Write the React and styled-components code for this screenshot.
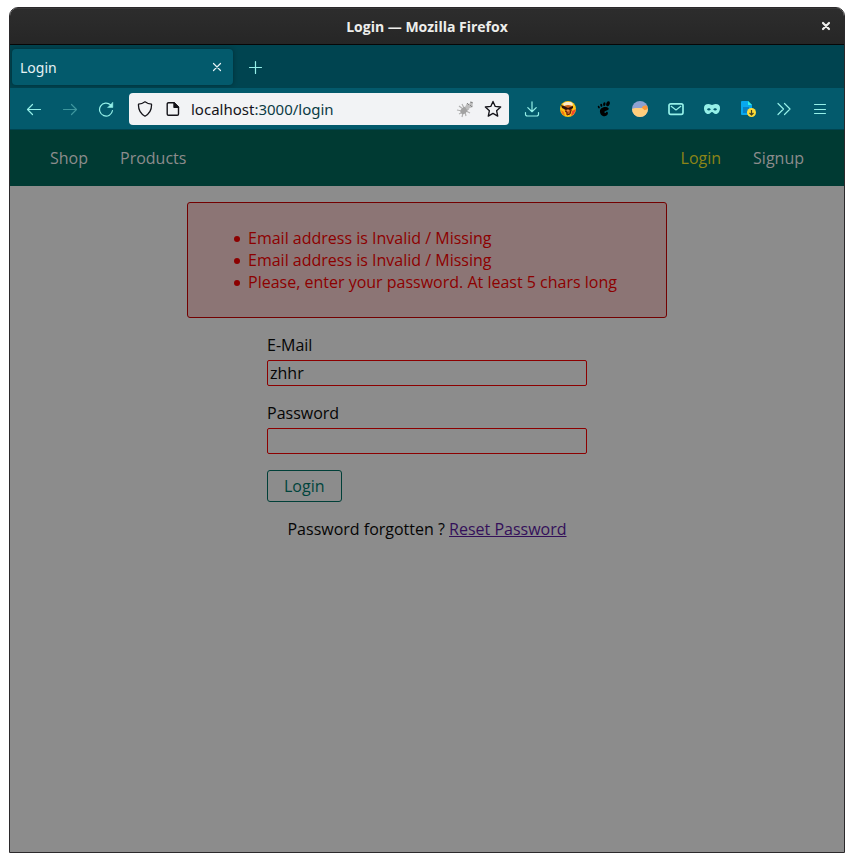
import React from "react";
import styled, { createGlobalStyle } from "styled-components";

const GlobalStyle = createGlobalStyle`
  *, *::before, *::after { box-sizing: border-box; }
  body { margin: 0; background: #ffffff; }
  button, input { font: inherit; }
`;

const Desktop = styled.div`
  display: flex;
  min-height: 100vh;
  padding: 7px 9px 9px;
  font-family: "Noto Sans", "Open Sans", sans-serif;
`;

const BrowserWindow = styled.div`
  flex: 1;
  min-width: 0;
  display: flex;
  flex-direction: column;
  border: 1px solid #2b292b;
  border-radius: 9px 9px 0 0;
  overflow: hidden;
`;

const TitleBar = styled.header`
  display: grid;
  grid-template-columns: 36px 1fr 36px;
  align-items: center;
  height: 37px;
  background: linear-gradient(#2d2d2d, #262626);
  border-bottom: 1px solid #070707;
  box-shadow: inset 0 1px 0 #383838;
`;

const WindowTitle = styled.div`
  grid-column: 2;
  padding-top: 2px;
  color: #eeeeec;
  font-family: "Open Sans", sans-serif;
  font-size: 14px;
  font-weight: 700;
  line-height: 20px;
  text-align: center;
`;

const IconButton = styled.button`
  display: grid;
  place-items: center;
  flex: none;
  width: ${(p) => p.$width || 36}px;
  height: 32px;
  padding: 0;
  border: 0;
  border-radius: 4px;
  background: transparent;
  color: ${(p) => p.$color || "#95f0e8"};
  opacity: ${(p) => (p.disabled ? 0.4 : 1)};
`;

const TabStrip = styled.div`
  display: flex;
  align-items: center;
  gap: 4px;
  height: 43px;
  padding: 0 2px;
  background: #004450;
`;

const Tab = styled.div`
  display: flex;
  align-items: center;
  justify-content: space-between;
  width: 221px;
  height: 36px;
  padding: 0 0 0 8px;
  border-radius: 4px;
  background: #035a6c;
  box-shadow: 0 0 4px rgba(0, 25, 30, 0.5);
  color: #e6f2f4;
  font-size: 14px;
  line-height: 20px;
`;

const TabTitle = styled.span`
  padding-top: 2px;
`;

const Toolbar = styled.div`
  display: flex;
  align-items: center;
  height: 42px;
  padding: 0 6px;
  background: #035a6c;
  border-bottom: 1px solid #004450;
`;

const AddressBar = styled.div`
  flex: 1;
  min-width: 0;
  display: flex;
  align-items: center;
  height: 32px;
  margin: 0 5px;
  padding: 0 2px;
  border-radius: 4px;
  background: #f2f3f5;
`;

const Address = styled.div`
  flex: 1;
  min-width: 0;
  padding-left: 4px;
  color: #0c3c44;
  font-size: 15px;
  line-height: 20px;
  white-space: nowrap;
  overflow: hidden;
`;

const Host = styled.span`
  color: #15141a;
`;

const Page = styled.div`
  flex: 1;
  background: #8c8c8c;
  color: #050505;
  font-family: "Open Sans", sans-serif;
  font-size: 16px;
  line-height: 22px;
`;

const MainNav = styled.nav`
  display: flex;
  align-items: center;
  justify-content: space-between;
  height: 56px;
  padding: 0 40px;
  background: #003a33;
`;

const NavGroup = styled.div`
  display: flex;
  gap: 32px;
`;

const NavLink = styled.a`
  color: ${(p) => (p.$active ? "#8c8517" : "#8c8c8c")};
  text-decoration: none;
`;

const Main = styled.main`
  display: flex;
  flex-direction: column;
  align-items: center;
  gap: 16px;
  padding: 16px;
`;

const ErrorBox = styled.div`
  width: 100%;
  max-width: 480px;
  padding: 24px 16px 24px 20px;
  border: 1px solid #730000;
  border-radius: 3px;
  background: #8c7575;
  color: #8c0000;
`;

const ErrorList = styled.ul`
  margin: 0;
  padding: 0 0 0 26px;
  list-style: none;
`;

const ErrorItem = styled.li`
  display: flex;
  align-items: center;
  gap: 8px;

  &::before {
    content: "";
    flex: none;
    width: 6px;
    height: 6px;
    margin-top: 2px;
    border-radius: 50%;
    background: currentColor;
  }
`;

const LoginForm = styled.form`
  display: flex;
  flex-direction: column;
  align-items: flex-start;
  gap: 16px;
  width: 100%;
  max-width: 320px;
`;

const Field = styled.div`
  display: flex;
  flex-direction: column;
  gap: 4px;
  width: 100%;
`;

const TextInput = styled.input`
  width: 100%;
  height: 26px;
  padding: 1px 2px;
  border: 1px solid #8c0000;
  border-radius: 2px;
  outline: none;
  background: #8c8c8c;
  color: #050505;
`;

const SubmitButton = styled.button`
  height: 32px;
  padding: 0 16px;
  border: 1px solid #003f38;
  border-radius: 3px;
  background: transparent;
  color: #00443c;
`;

const ResetText = styled.p`
  margin: 0;
`;

const ResetLink = styled.a`
  color: #34105a;
`;

const Line = ({ size = 16, width = 1.2, children }) => (
  <svg
    width={size}
    height={size}
    viewBox="0 0 16 16"
    fill="none"
    stroke="currentColor"
    strokeWidth={width}
    strokeLinecap="round"
    strokeLinejoin="round"
    aria-hidden="true"
  >
    {children}
  </svg>
);

const BackIcon = () => (
  <Line>
    <path d="M14.5 8.5h-13M6.5 3.5l-5 5 5 5" />
  </Line>
);

const ForwardIcon = () => (
  <Line>
    <path d="M1.5 8.5h13M9.5 3.5l5 5-5 5" />
  </Line>
);

const ReloadIcon = () => (
  <Line>
    <path d="M12.6 3.9A6.5 6.500 0 1 0 14.5 9.5" />
    <path d="M14.800 1.500v5h-5z" fill="currentColor" strokeWidth="0.5" />
  </Line>
);

const ShieldIcon = () => (
  <Line width={1.3}>
    <path d="M8 .8c2 1.5 4.200 2.300 6.500 2.400.3 4.800-1.800 9.300-6.500 12-4.700-2.700-6.800-7.200-6.500-12C3.800 3.100 6 2.300 8 .8z" />
  </Line>
);

const PageIcon = () => (
  <Line width={1.4}>
    <path d="M3.500 1.700h5.500l4.500 4.500v6.800a1.300 1.300 0 0 1-1.300 1.300H3.500A1.300 1.300 0 0 1 2.200 13V3a1.300 1.300 0 0 1 1.300-1.300z" />
    <path d="M9 1.700v4.500h4.500z" fill="currentColor" />
  </Line>
);

const BugIcon = () => (
  <svg width="18" height="18" viewBox="0 0 18 18" aria-hidden="true">
    <path
      d="M3 6l4 3M1 10l5 1M3 14l4-2M6 17l1-4M10 16l-1-4M14 13l-4-2M6 4l2 4M13 9l-3 1"
      stroke="#b0b0b0"
      strokeWidth="1.2"
    />
    <ellipse cx="8" cy="10.5" rx="4" ry="3" fill="#a2a2a2" transform="rotate(-45 8 10.5)" />
    <path d="M9 7l2-4 2 1 3-3 1 6-3 1-3 2z" fill="#bdbdbd" />
    <path d="M11 3l2 2M14 2l3 1M14 5l2 2" stroke="#858585" strokeWidth="1" />
  </svg>
);

const StarIcon = () => (
  <Line size={18} width={1.2}>
    <path d="M8 1.300l2 4.400 4.800.5-3.600 3.300 1 4.800L8 11.900l-4.200 2.400 1-4.800L1.200 6.200 6 5.700z" />
  </Line>
);

const DownloadIcon = () => (
  <Line>
    <path d="M8 .8v9.700M3.800 6.600L8 10.700l4.200-4.100M1.500 11.500v1.700a1.800 1.800 0 0 0 1.800 1.800h9.400a1.800 1.800 0 0 0 1.800-1.800v-1.700" />
  </Line>
);

const FoxIcon = () => (
  <svg width="16" height="16" viewBox="0 0 16 16" aria-hidden="true">
    <circle cx="8" cy="8" r="8" fill="#ffc414" />
    <path d="M3 2.500L6 1h5l2 2-1 2-4-1-4 1z" fill="#fbe9c8" />
    <path d="M4 5l4-1 4.500 1-.5 4-2 4-3 1-2-4z" fill="#c5601d" />
    <path d="M1 4l3 1 4 2 5-2v2l-3 2-2-1-2 1-4-2z" fill="#2a100a" />
    <path d="M5 10l2 1v3M11 9l-1 4-3 1" stroke="#5b1b09" fill="none" />
    <path d="M12 10l4-2-2 5-3 2z" fill="#f4482a" />
    <path d="M1 9l3 2 1 4-3-2z" fill="#f47a12" />
    <path d="M7 9h2l-1 2z" fill="#f3a468" />
  </svg>
);

const FootIcon = () => (
  <svg width="16" height="16" viewBox="0 0 16 16" fill="#000000" aria-hidden="true">
    <ellipse cx="12" cy="2.800" rx="1.700" ry="2.600" transform="rotate(18 12 2.800)" />
    <ellipse cx="8.300" cy="3.100" rx="1.200" ry="1.900" transform="rotate(8 8.300 3.100)" />
    <ellipse cx="5.300" cy="4.300" rx="1" ry="1.600" transform="rotate(-12 5.300 4.300)" />
    <ellipse cx="2.800" cy="6.100" rx=".9" ry="1.400" transform="rotate(-28 2.800 6.100)" />
    <path d="M12.600 7.200C10.300 4.700 4 6.200 3.900 10.200c0 3.200 2.500 5.100 4.800 5 2.200-.1 3.500-1.700 3.200-3.400-.3-1.200-1.500-1.200-2-.4-.5 1-1.500.7-1.500-.3 0-1.700 5.100-1.500 4.200-3.900z" />
  </svg>
);

const DuneIcon = () => (
  <svg width="16" height="16" viewBox="0 0 16 16" aria-hidden="true">
    <circle cx="8" cy="8" r="8" fill="#8da2d1" />
    <path d="M0 8c3-1.800 5-.8 8-1h8v1A8 8 0 0 1 0 8z" fill="#ffce7c" />
    <path d="M9.800 6.800c1-2 3.200-2.900 5.300-2l.8 3.200-3.200 1.200z" fill="#fa9839" />
  </svg>
);

const MailIcon = () => (
  <Line width={1.7}>
    <rect x="1" y="2.800" width="14" height="10.500" rx="1.700" />
    <path d="M3.200 5.300L8 9l4.800-3.700" strokeWidth="1.2" />
  </Line>
);

const MaskIcon = () => (
  <svg width="16" height="16" viewBox="0 0 16 16" fill="currentColor" aria-hidden="true">
    <path
      fillRule="evenodd"
      d="M4.500 3C1.500 3 0 4.500 0 7c0 3.300 1.700 6 4.300 6C6 13 7 11 8 11s2 2 3.700 2C14.300 13 16 10.300 16 7c0-2.500-1.500-4-4.500-4C9.800 3 9 4 8 4S6.200 3 4.500 3zM3 8.400C3.600 7 6 6.800 6.800 8.500 5.800 9.800 3.800 9.900 3 8.400zm6.200.1c.8-1.700 3.200-1.500 3.800-.1-.8 1.500-2.800 1.400-3.800.1z"
    />
  </svg>
);

const DocumentIcon = () => (
  <svg width="16" height="18" viewBox="0 0 16 18" aria-hidden="true">
    <path d="M2 1h6l4 4v10H2a1 1 0 0 1-1-1V2a1 1 0 0 1 1-1z" fill="#07a8ef" />
    <path d="M8 1l4 4H8z" fill="#32eee2" />
    <path d="M3 8h6M3 10h5M3 12h4" stroke="#085f9d" />
    <circle cx="11.500" cy="12.500" r="4.500" fill="#ffdc37" />
    <path d="M11.500 10v5M9.500 13l2 2 2-2" stroke="#464321" strokeWidth="1.2" fill="none" />
  </svg>
);

const ChevronsIcon = () => (
  <Line>
    <path d="M2 2.500L7.500 8 2 13.500M8.500 2.500L14 8l-5.500 5.500" />
  </Line>
);

const MenuIcon = () => (
  <Line width={1}>
    <path d="M2.500 3.500h11M2.500 8.500h11M2.500 12.500h11" />
  </Line>
);

const PlusIcon = () => (
  <Line>
    <path d="M2.500 8.500h12M8.500 2.500v12" />
  </Line>
);

const CrossIcon = ({ width = 1.2, inset = 4.5 }) => {
  const far = 16 - inset;
  return (
    <Line width={width}>
      <path d={`M${inset} ${inset}L${far} ${far}M${far} ${inset}L${inset} ${far}`} />
    </Line>
  );
};

const extensions = [
  ["Downloads", DownloadIcon],
  ["Fox profile", FoxIcon],
  ["Desktop integration", FootIcon],
  ["Color theme", DuneIcon],
  ["Mail", MailIcon],
  ["Privacy mask", MaskIcon],
  ["Save page", DocumentIcon],
  ["More tools", ChevronsIcon],
  ["Open menu", MenuIcon],
];

const errors = [
  "Email address is Invalid / Missing",
  "Email address is Invalid / Missing",
  "Please, enter your password. At least 5 chars long",
];

export default function App() {
  return (
    <Desktop>
      <GlobalStyle />
      <BrowserWindow>
        <TitleBar>
          <WindowTitle>Login — Mozilla Firefox</WindowTitle>
          <IconButton aria-label="Close window" $color="#eeeeec">
            <CrossIcon width={2.2} inset={5} />
          </IconButton>
        </TitleBar>
        <TabStrip>
          <Tab>
            <TabTitle>Login</TabTitle>
            <IconButton aria-label="Close tab" $width={32} $color="#e6f2f4">
              <CrossIcon />
            </IconButton>
          </Tab>
          <IconButton aria-label="New tab">
            <PlusIcon />
          </IconButton>
        </TabStrip>
        <Toolbar>
          <IconButton aria-label="Back"><BackIcon /></IconButton>
          <IconButton aria-label="Forward" disabled><ForwardIcon /></IconButton>
          <IconButton aria-label="Reload"><ReloadIcon /></IconButton>
          <AddressBar>
            <IconButton aria-label="Tracking protection" $width={28} $color="#15141a"><ShieldIcon /></IconButton>
            <IconButton aria-label="Site information" $width={28} $color="#15141a"><PageIcon /></IconButton>
            <Address><Host>localhost</Host>:3000/login</Address>
            <IconButton aria-label="Debug" $width={28}><BugIcon /></IconButton>
            <IconButton aria-label="Bookmark" $width={28} $color="#15141a"><StarIcon /></IconButton>
          </AddressBar>
          {extensions.map(([label, Icon]) => (
            <IconButton key={label} aria-label={label}><Icon /></IconButton>
          ))}
        </Toolbar>
        <Page>
          <MainNav>
            <NavGroup>
              <NavLink href="#shop">Shop</NavLink>
              <NavLink href="#products">Products</NavLink>
            </NavGroup>
            <NavGroup>
              <NavLink href="#login" $active>Login</NavLink>
              <NavLink href="#signup">Signup</NavLink>
            </NavGroup>
          </MainNav>
          <Main>
            <ErrorBox role="alert">
              <ErrorList>
                {errors.map((text, i) => <ErrorItem key={i}>{text}</ErrorItem>)}
              </ErrorList>
            </ErrorBox>
            <LoginForm noValidate onSubmit={(e) => e.preventDefault()}>
              <Field>
                <label htmlFor="email">E-Mail</label>
                <TextInput id="email" type="email" defaultValue="zhhr" />
              </Field>
              <Field>
                <label htmlFor="password">Password</label>
                <TextInput id="password" type="password" />
              </Field>
              <SubmitButton type="submit">Login</SubmitButton>
            </LoginForm>
            <ResetText>
              Password forgotten ? <ResetLink href="#reset">Reset Password</ResetLink>
            </ResetText>
          </Main>
        </Page>
      </BrowserWindow>
    </Desktop>
  );
}
